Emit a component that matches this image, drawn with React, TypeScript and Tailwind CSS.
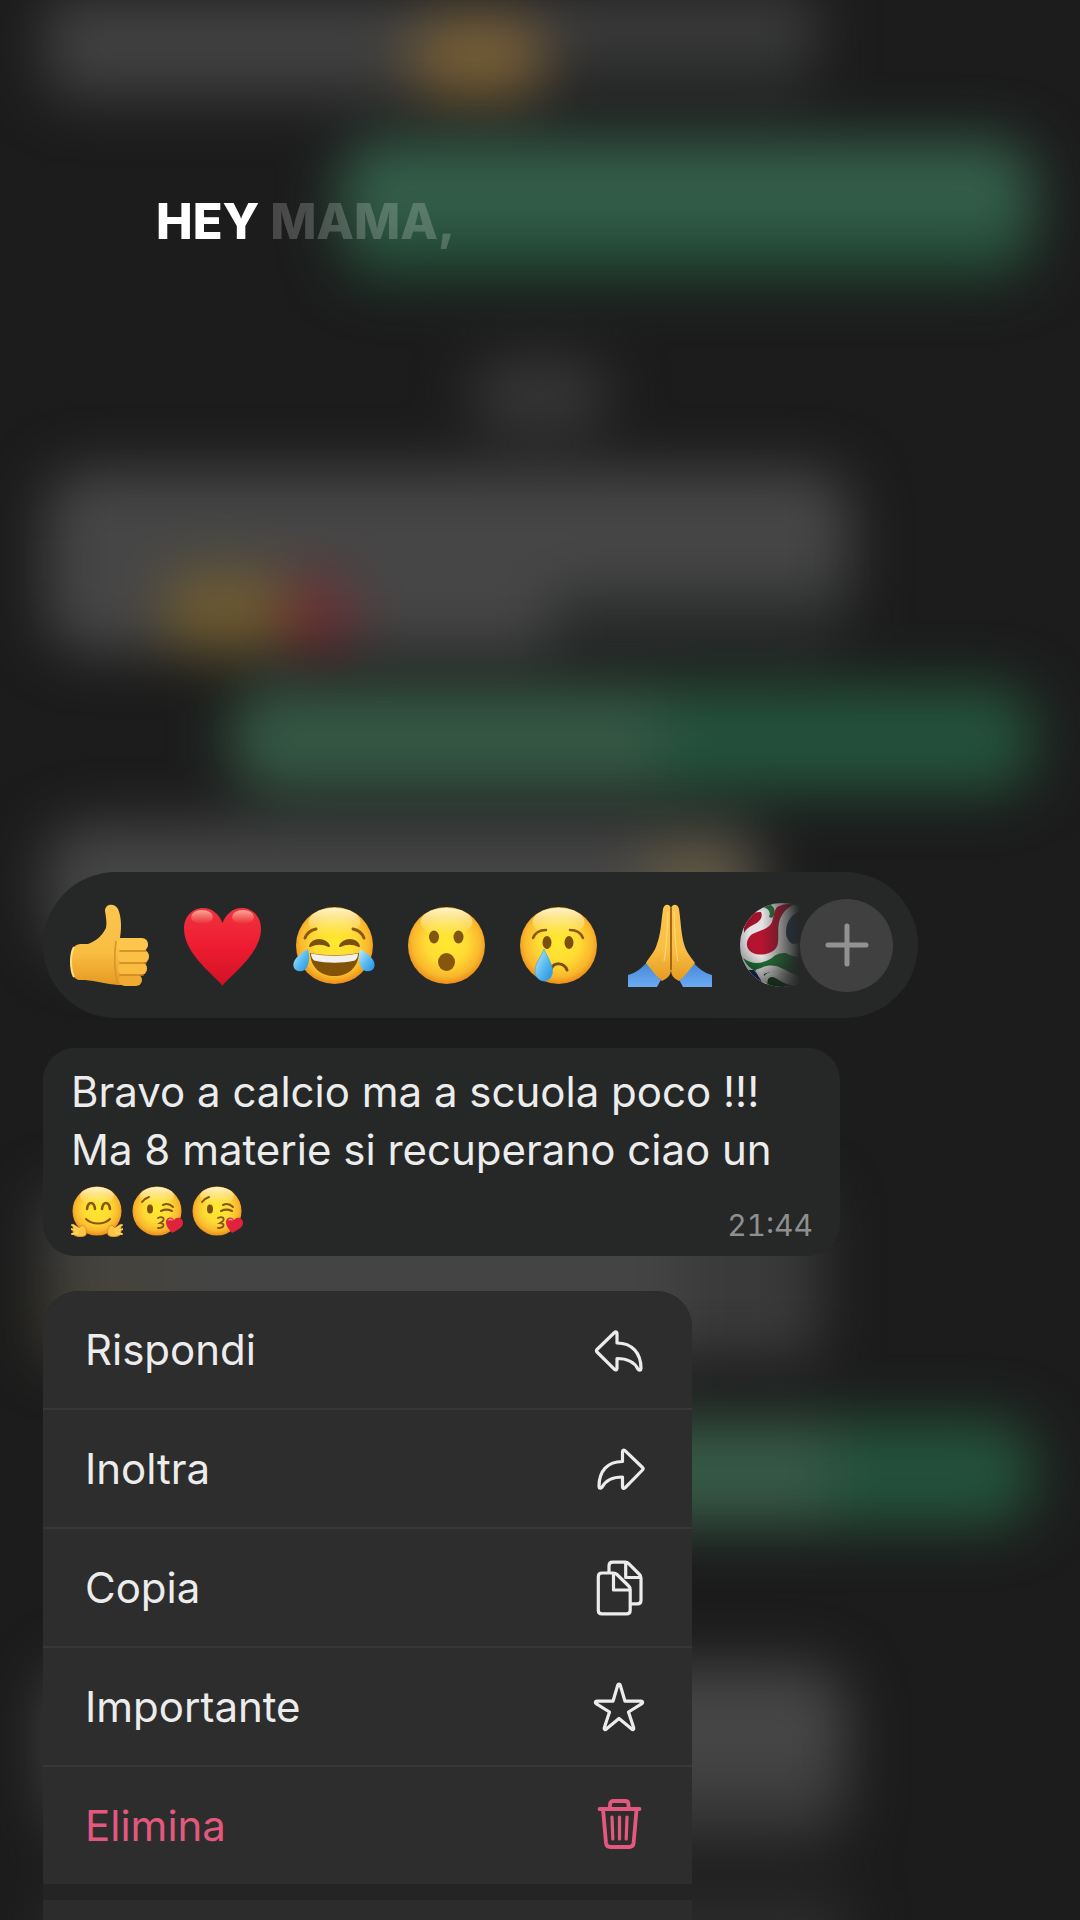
import type { ReactNode } from 'react';

// Shared gradients for all the emoji drawings
function EmojiDefs() {
  return (
    <svg className="absolute w-0 h-0" aria-hidden="true">
      <defs>
        <radialGradient id="face" cx="0.5" cy="0.46" r="0.54">
          <stop offset="0" stopColor="#ffe92e" />
          <stop offset="0.5" stopColor="#fedb34" />
          <stop offset="0.82" stopColor="#fab82c" />
          <stop offset="1" stopColor="#e98f1c" />
        </radialGradient>
        <linearGradient id="shine" x1="0" y1="0" x2="0" y2="1">
          <stop offset="0" stopColor="#fffbe0" stopOpacity="0.9" />
          <stop offset="1" stopColor="#fff3a0" stopOpacity="0" />
        </linearGradient>
        <linearGradient id="hand" x1="0" y1="0" x2="0" y2="1">
          <stop offset="0" stopColor="#fdc650" />
          <stop offset="0.6" stopColor="#f9bd42" />
          <stop offset="1" stopColor="#e59a22" />
        </linearGradient>
        <linearGradient id="heart" x1="0" y1="0" x2="0" y2="1">
          <stop offset="0" stopColor="#f0323f" />
          <stop offset="0.5" stopColor="#ee1c30" />
          <stop offset="1" stopColor="#cf1226" />
        </linearGradient>
        <linearGradient id="tear" x1="0" y1="0" x2="1" y2="1">
          <stop offset="0" stopColor="#c9ecfa" />
          <stop offset="0.5" stopColor="#5fbdf0" />
          <stop offset="1" stopColor="#1f8fe0" />
        </linearGradient>
        <linearGradient id="cuff" x1="0" y1="0" x2="0" y2="1">
          <stop offset="0" stopColor="#4586d6" />
          <stop offset="1" stopColor="#6cabf2" />
        </linearGradient>
        <radialGradient id="ballShade" cx="0.42" cy="0.38" r="0.62">
          <stop offset="0.5" stopColor="#000" stopOpacity="0" />
          <stop offset="1" stopColor="#000" stopOpacity="0.55" />
        </radialGradient>
        <clipPath id="ballClip">
          <circle cx="42" cy="42" r="42" />
        </clipPath>
      </defs>
    </svg>
  );
}

function BigEmoji({ children }: { children: ReactNode }) {
  return (
    <svg className="w-[84px] h-[84px] overflow-visible" viewBox="0 0 84 84" fill="none" aria-hidden="true">
      {children}
    </svg>
  );
}

function Face() {
  return (
    <>
      <circle cx="42.5" cy="42.5" r="38.5" fill="url(#face)" />
      <ellipse cx="42.5" cy="19" rx="26" ry="14" fill="url(#shine)" />
    </>
  );
}

function ThumbsUp() {
  return (
    <BigEmoji>
      <path d="M37 8c0-8 10-8 13-2 3 7 4 17 2 29l10 0v47l-12 0c-12-1-22-4-33-5-4 0-8 1-11-3-5-8-4-24 0-30 3-4 9-3 14-3 8-3 14-8 18-16 1-5 0-11-1-17z" fill="url(#hand)" />
      <path d="M6 44c-4 7-4 22 0 30" stroke="#ffdf80" strokeWidth="2" />
      <path d="M48 38c-2 12-2 30 2 43" stroke="#d8952b" strokeWidth="1.6" />
      <rect x="49" y="35" width="31" height="13" rx="6" fill="#fdc54b" />
      <rect x="50" y="47" width="31" height="13" rx="6" fill="#fbc046" />
      <rect x="50" y="59" width="29" height="13" rx="6" fill="#f9bb40" />
      <rect x="51" y="71" width="23" height="12" rx="6" fill="#f1ab31" />
      <path d="M52 48h26M52 60h26M52 72h23" stroke="#cb861f" strokeWidth="1.6" strokeLinecap="round" />
    </BigEmoji>
  );
}

function Heart() {
  return (
    <BigEmoji>
      <path d="M42.500 83C38 75 4 52 4 26 4 14 12 5 23 5c9 0 16 6 19.500 15C46 11 53 5 62 5c11 0 19 9 19 21 0 26-34 49-38.500 57z" fill="url(#heart)" />
      <ellipse cx="22" cy="14" rx="11" ry="7" fill="url(#shine)" opacity="0.65" />
      <ellipse cx="63" cy="14" rx="11" ry="7" fill="url(#shine)" opacity="0.65" />
    </BigEmoji>
  );
}

function Laughing() {
  return (
    <BigEmoji>
      <Face />
      <path d="M13 35c2-5 6-8 11-9M72 35c-2-5-6-8-11-9" stroke="#8a5a12" strokeWidth="3" strokeLinecap="round" />
      <path d="M18 43c3-8 15-8 19 0-6-3-13-3-19 0zM48 43c4-8 16-8 19 0-6-3-13-3-19 0z" fill="#7b500f" stroke="#7b500f" strokeWidth="2" strokeLinejoin="round" />
      <path d="M18 50c16 3 33 3 49 0-1 15-11 23-24.500 23S19 65 18 50z" fill="#815208" />
      <path d="M19 50.500c16 3 31 3 47 0 0 3-1 5-3 7-13 3-28 3-41 0-2-2-3-4-3-7z" fill="#f3f1ee" />
      <path d="M16 46c2 8 1 14-1 18-2 5-10 6-13 1-3-7 5-14 14-19z" fill="url(#tear)" />
      <path d="M68 46c-2 8-1 14 1 18 2 5 10 6 13 1 3-7-5-14-14-19z" fill="url(#tear)" />
    </BigEmoji>
  );
}

function Surprised() {
  return (
    <BigEmoji>
      <Face />
      <ellipse cx="30" cy="34" rx="5" ry="6.500" fill="#805611" />
      <ellipse cx="54.500" cy="34" rx="5" ry="6.500" fill="#805611" />
      <ellipse cx="42.500" cy="59" rx="8.500" ry="9" fill="#85560b" />
    </BigEmoji>
  );
}

function Crying() {
  return (
    <BigEmoji>
      <Face />
      <path d="M17 35c2-5 6-8 13-8M54 27c6 0 11 3 13 8" stroke="#8a5a12" strokeWidth="2.500" strokeLinecap="round" />
      <ellipse cx="31" cy="39.500" rx="4.500" ry="6.500" fill="#7b500f" />
      <ellipse cx="53" cy="39.500" rx="4.500" ry="6.500" fill="#7b500f" />
      <path d="M35 66c3-7 13-7 16 1" stroke="#7b500f" strokeWidth="3" strokeLinecap="round" />
      <path d="M28 46c3 8 8.500 14 8.500 22 0 6-4 10-8.500 10s-9-4-9-10c0-8 6-14 9-22z" fill="url(#tear)" stroke="#3a9de2" strokeWidth="0.600" />
    </BigEmoji>
  );
}

function Praying() {
  return (
    <BigEmoji>
      <path d="M0 72c8-2 14-7 19-13l14 18c-2 3-3 5-4 7H0zM84 72c-8-2-14-7-19-13L51 77c2 3 3 5 4 7h29z" fill="url(#cuff)" />
      <path d="M43 6c-1-6-7-5-8 0-2 14-2 24-6 35-2 8-8 13-11 19 5 6 9 12 16 18 6-3 9-6 9-12z" fill="url(#hand)" />
      <path d="M43 6c1-6 7-5 8 0 2 14 2 24 5 35 2 8 7 13 11 19-5 6-9 12-16 18-6-3-8-6-8-12z" fill="url(#hand)" />
      <path d="M43 5v62" stroke="#9d6010" strokeWidth="1.800" />
      <path d="M40 8c-1 20-1 36-4 50M46 8c1 20 1 36 4 50" stroke="#ffd778" strokeWidth="1.200" />
    </BigEmoji>
  );
}

function Football() {
  return (
    <BigEmoji>
      <g clipPath="url(#ballClip)">
        <rect width="84" height="84" fill="#e4e2e2" />
        <path d="M4 30C3 17 10 8 21 9c3 6-3 11-8 13-4 2-7 4-9 8z" fill="#a3122b" />
        <path d="M26 0c11 3 10 11 6 15l-3-1c2-5 0-8-6-10z" fill="#25703a" />
        <path d="M37 4c5-3 14-4 20-3-9 2-14 8-17 15-3 8-1 16-2 24-1 10-16 14-25 10C6 47 5 39 10 33c6-6 18-5 22-14 2-6 2-11 5-15z" fill="#b41430" />
        <path d="M58 9c-8 4-12 11-12 20 0 6 3 10 7 12l31-4V9z" fill="#24405c" />
        <path d="M3 55c10 8 21 5 29 0 4-4 8-5 14-5 6 4 12 4 18 4v19c-10 0-15-5-23-8-8-4-17-3-25 3-6-2-10-7-13-13z" fill="#1f7436" />
        <path d="M14 67c3 4 6 7 9 12-6-2-12-7-15-12z" fill="#1d2c63" />
        <path d="M24 71c10-5 15 2 21 6 7 4 12 4 18 4v6H30c-4-5-7-10-6-16z" fill="#17502a" />
        <path d="M18 66c2 6 4 9 7 13 0-7 6-9 12-6 6 4 12 8 24 7" stroke="#eeeeee" strokeWidth="5" />
        <circle cx="42" cy="42" r="42" fill="url(#ballShade)" />
      </g>
    </BigEmoji>
  );
}

function SmallFace() {
  return (
    <>
      <circle cx="26" cy="26" r="24.500" fill="url(#face)" />
      <ellipse cx="26" cy="11" rx="17" ry="9" fill="url(#shine)" />
    </>
  );
}

function Hugging() {
  return (
    <svg className="w-[52px] h-[52px]" viewBox="0 0 52 52" fill="none" aria-hidden="true">
      <SmallFace />
      <path d="M16 24c1-8 7-8 8 0M31 24c1-8 7-8 8 0" stroke="#85560f" strokeWidth="2.500" strokeLinecap="round" />
      <path d="M15 34c6 6 18 6 24 0" stroke="#85560f" strokeWidth="2" strokeLinecap="round" />
      <path d="M2 39l6 4 3-3c4 1 5 5 4 10-4 3-9 2-12 0l-1-3zM50 39l-6 4-3-3c-4 1-5 5-4 10 4 3 9 2 12 0l1-3z" fill="#fcc443" stroke="#d98a1e" strokeWidth="0.800" />
      <path d="M1 40l7 4M0 44l7 2M1 49l6-1M51 40l-7 4M52 44l-7 2M51 49l-6-1" stroke="#ffd25c" strokeWidth="1.800" strokeLinecap="round" />
    </svg>
  );
}

function Kiss() {
  return (
    <svg className="w-[52px] h-[52px]" viewBox="0 0 52 52" fill="none" aria-hidden="true">
      <SmallFace />
      <ellipse cx="19" cy="24" rx="3" ry="4.500" fill="#7b500f" />
      <path d="M11 17c2-3 4-4 7-5M32 20c4-2 7-1 10 2M30 26c4-2 7-2 11 0" stroke="#85560f" strokeWidth="2" strokeLinecap="round" />
      <path d="M27 33c4-2 7 0 5 3l-3 2c5 0 5 5-2 5" stroke="#85560f" strokeWidth="1.800" strokeLinecap="round" />
      <path d="M41 48c-2-3-6-6-6-11 0-5 6-6 8-2 3-4 9-2 9 3 0 5-6 7-11 10z" fill="#e0233c" />
      <path d="M38 35c1-1 2-1 3 0" stroke="#ff8a94" strokeWidth="1.500" strokeLinecap="round" />
    </svg>
  );
}

function MenuIcon({ children }: { children: ReactNode }) {
  return (
    <svg
      className="w-14 h-14 shrink-0"
      viewBox="0 0 56 56"
      fill="none"
      stroke="currentColor"
      strokeWidth="3.200"
      strokeLinecap="round"
      strokeLinejoin="round"
      aria-hidden="true"
    >
      {children}
    </svg>
  );
}

const reactions = [
  { label: 'Mi piace', icon: <ThumbsUp /> },
  { label: 'Cuore', icon: <Heart /> },
  { label: 'Risata', icon: <Laughing /> },
  { label: 'Sorpresa', icon: <Surprised /> },
  { label: 'Tristezza', icon: <Crying /> },
  { label: 'Grazie', icon: <Praying /> },
  { label: 'Pallone', icon: <Football /> },
];

const menuItems = [
  {
    label: 'Rispondi',
    icon: <path d="M6 27.500L23.500 10.500c1.200-1 2.500-.6 2.500.8V21c15 0 24 10 24 25.500 0 2-2 2.300-3 .700C43 39 36 36.500 26 36.500v10c0 1.500-1.300 2-2.500.800L6 30c-.8-.8-.8-1.700 0-2.500z" />,
  },
  {
    label: 'Inoltra',
    icon: <path d="M51.500 26.500L34 9.700c-1.200-1-2.500-.6-2.500.8v10C16.500 20.500 8 30 8 45.500c0 2 2 2.300 3 .700 4-7.500 11-10.200 20.500-10.200v10c0 1.500 1.300 2 2.500.800L51.500 29c.8-.8.8-1.700 0-2.500z" />,
  },
  {
    label: 'Copia',
    icon: (
      <>
        <path d="M22.500 13H11c-2.500 0-3.700 1.200-3.700 3.700v33.500c0 2.500 1.200 3.700 3.700 3.700h24.500c2.500 0 3.700-1.200 3.700-3.700V29.500c0-1.500-.5-2.500-1.500-3.500L26 14.500c-1-1-2-1.500-3.500-1.500zM22.500 13.500v16.500H39" />
        <path d="M18 12.500V5.900c0-2.500 1.200-3.700 3.700-3.700h12.500c1.500 0 2.500.5 3.500 1.500L48.500 14.500c1 1 1.500 2 1.500 3.500v22.200c0 2.500-1.200 3.700-3.700 3.700H40M34.700 2.500v15H49.500" />
      </>
    ),
  },
  {
    label: 'Importante',
    icon: <path d="M26.800 6c.4-1.300 2-1.300 2.400 0L34 22.200h16c1.800 0 2.200 1.500.9 2.500L37.500 33l5.200 15.700c.5 1.500-.8 2.300-2 1.400L28 39.500 15.300 50.100c-1.200.9-2.500.1-2-1.400l5.200-15.700L5.100 24.700c-1.300-1-.9-2.500.9-2.500h16z" />,
  },
  {
    label: 'Elimina',
    danger: true,
    icon: (
      <>
        <path d="M8.500 11h40M19 11V6.500C19 4 20.300 3 22.500 3h11.500c2.200 0 3.500 1 3.500 3.500V11M12 11l3 34c.3 2.700 1.500 4 4.300 4h19c2.800 0 4-1.300 4.300-4l3-34" strokeWidth="3.800" />
        <path d="M21 19l.8 22M28.500 19v22M36 19l-.8 22" />
      </>
    ),
  },
];

// Conversation behind the overlay, out of focus
function BlurredChat() {
  return (
    <div className="absolute inset-0 overflow-hidden" aria-hidden="true">
      <div className="flex flex-col blur-[28px] px-[46px]">
        <div className="w-[770px] h-[100px] shrink-0 flex bg-linear-to-b from-[#464646] to-[#3b3b3b] pt-4 rounded-b-3xl overflow-hidden">
          <div className="w-[364px]" />
          <div className="w-[136px] h-[84px] bg-[#785f36] rounded-full" />
          <div className="flex-1 mt-6 bg-[#2c2d2d]" />
        </div>
        <div className="w-[694px] h-[140px] shrink-0 mt-10 self-end rounded-[40px] bg-linear-to-b from-[#345f4b] from-50% to-[#1b402d]" />
        <div className="w-[140px] h-[76px] shrink-0 mt-[78px] self-center bg-[#363636] rounded-full" />
        <div className="w-[804px] h-[182px] shrink-0 mt-[36px] flex items-end rounded-[40px] overflow-hidden bg-[#464646]">
          <div className="w-[119px]" />
          <div className="w-[120px] h-[80px] bg-[#705c31] rounded-3xl" />
          <div className="w-[66px] h-[76px] bg-[#702e32] rounded-3xl" />
          <div className="w-[200px]" />
          <div className="flex-1 h-[60px] bg-[#2a2c2c]" />
        </div>
        <div className="w-[804px] h-[106px] shrink-0 mt-[34px] self-end flex rounded-[40px] overflow-hidden">
          <div className="w-[430px] bg-[#355844]" />
          <div className="flex-1 bg-[#24523b]" />
        </div>
        <div className="w-[719px] h-[130px] shrink-0 mt-[32px] flex justify-end rounded-[40px] overflow-hidden bg-[#464646] pr-5">
          <div className="w-[100px] h-[60px] mt-6 bg-[#665c42]" />
        </div>
        <div className="w-[774px] h-[164px] shrink-0 mt-[240px] flex items-end bg-[#444]">
          <div className="w-[120px] h-[90px] bg-[#464338]" />
          <div className="flex-1" />
          <div className="w-[140px] h-[164px] bg-[#3a3a3a]" />
        </div>
        <div className="w-[804px] h-[106px] shrink-0 mt-[62px] self-end flex rounded-[40px] overflow-hidden">
          <div className="w-[600px] bg-[#375946]" />
          <div className="flex-1 bg-[#24523b]" />
        </div>
        <div className="w-[800px] h-[180px] shrink-0 mt-[140px] rounded-[40px] bg-linear-to-b from-[#464646] from-50% to-[#303030]" />
        <div className="w-[800px] h-20 shrink-0 mt-12 bg-[#2c2c2c]" />
      </div>
    </div>
  );
}

export default function App() {
  return (
    <main className="relative min-h-screen overflow-hidden bg-[#1c1c1c] text-[#ececec] font-['Inter','Liberation_Sans',sans-serif]">
      <EmojiDefs />
      <BlurredChat />

      <div className="relative px-[43px] pt-48">
        <h1 className="pl-[113px] text-[49px] leading-[60px] font-extrabold text-white">
          HEY <span className="text-white/20">MAMA,</span>
        </h1>

        {/* Reactions */}
        <div className="mt-[620px] flex items-center w-[875px] max-w-full h-[146px] pr-[25px] rounded-full bg-[#262727]">
          <div className="flex-1 min-w-0 flex gap-7 pl-[25px] py-3 overflow-hidden mask-r-from-95%">
            {reactions.map((reaction) => (
              <button key={reaction.label} type="button" aria-label={reaction.label} className="shrink-0">
                {reaction.icon}
              </button>
            ))}
          </div>
          <button
            type="button"
            aria-label="Altre reazioni"
            className="w-[93px] h-[93px] shrink-0 flex items-center justify-center rounded-full bg-[#404040] text-[#929292]"
          >
            <svg className="w-11 h-11" viewBox="0 0 44 44" stroke="currentColor" strokeWidth="5" strokeLinecap="round" aria-hidden="true">
              <path d="M22 3v38M3 22h38" />
            </svg>
          </button>
        </div>

        {/* Selected message */}
        <article className="mt-[30px] w-[797px] max-w-full pl-7 pr-[27px] pt-[15px] pb-[19px] rounded-[32px] bg-[#262727] text-[42px] leading-[58px]">
          <p>Bravo a calcio ma a scuola poco !!!</p>
          <p>Ma 8 materie si recuperano ciao un</p>
          <div className="flex items-end justify-between h-[58px]">
            <div className="flex gap-2">
              <Hugging />
              <Kiss />
              <Kiss />
            </div>
            <time className="text-[30px] leading-6 tabular-nums text-[#8f8f8f]">21:44</time>
          </div>
        </article>

        {/* Context menu */}
        <div className="mt-[35px] w-[649px] max-w-full rounded-t-[36px] overflow-hidden bg-[#242424]">
          <ul className="bg-[#2d2d2d]">
            {menuItems.map((item) => (
              <li key={item.label} className="border-b-2 border-[#373737] last:border-b-0">
                <button
                  type="button"
                  className={
                    item.danger
                      ? 'w-full h-[117px] flex items-center justify-between pl-[42px] pr-[45px] text-[42px] text-[#e4587f]'
                      : 'w-full h-[117px] flex items-center justify-between pl-[42px] pr-[45px] text-[42px]'
                  }
                >
                  {item.label}
                  <MenuIcon>{item.icon}</MenuIcon>
                </button>
              </li>
            ))}
          </ul>
          <div className="h-5 mt-4 bg-[#2c2c2c]" />
        </div>
      </div>
    </main>
  );
}
